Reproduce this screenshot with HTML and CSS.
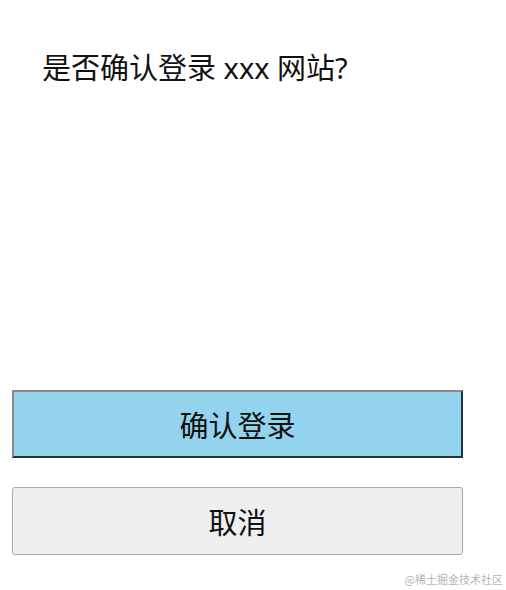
FILE: index.html
```html
<!DOCTYPE html>
<html lang="zh-CN">
<head>
  <meta charset="UTF-8" />
  <meta name="viewport" content="width=device-width, initial-scale=1.0"/>
  <title>确认登录</title>
  <link rel="stylesheet" href="styles.css">
</head>
<body>
  <div class="page">
    <h1 class="title">是否确认登录 xxx 网站?</h1>

    <div class="actions">
      <button class="btn btn-confirm">确认登录</button>
      <button class="btn btn-cancel">取消</button>
    </div>
  </div>

  <div class="watermark">@稀土掘金技术社区</div>
</body>
</html>
```

FILE: styles.css
```css
html, body {
  margin: 0;
  padding: 0;
  background: #fff;
}

body {
  font-family: "Noto Sans", "Noto Sans CJK SC", sans-serif;
  color: #111;
  position: relative;
  height: 590px;
  overflow: hidden;
}

.page {
  display: flex;
  flex-direction: column;
  padding: 0 43px 0 12px;
}

.title {
  font-size: 29px;
  font-weight: normal;
  line-height: 40px;
  margin: 48px 0 0 30px;
}

.actions {
  display: flex;
  flex-direction: column;
  gap: 29px;
  margin-top: 302px;
}

.btn {
  font-family: inherit;
  font-size: 29px;
  color: #111;
  height: 68px;
  width: 451px;
  padding: 0;
  cursor: pointer;
}

.btn-confirm {
  background: #93d3ee;
  border-style: solid;
  border-width: 2px;
  border-color: #8a8a8a #23343d #23343d #8a8a8a;
  border-radius: 0;
}

.btn-cancel {
  background: #efefef;
  border: 1px solid #a9a9a9;
  border-radius: 3px;
}

.watermark {
  position: absolute;
  right: 3px;
  bottom: 3px;
  font-size: 11px;
  color: #b5b5b5;
  font-family: "Noto Sans CJK SC", sans-serif;
}
```
